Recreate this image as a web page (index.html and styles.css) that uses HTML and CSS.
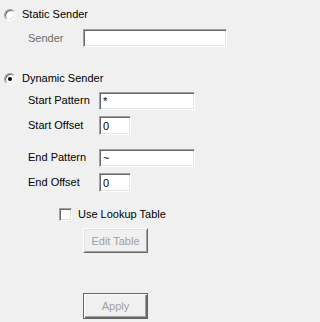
FILE: index.html
```html
<!DOCTYPE html>
<html>
<head>
<meta charset="utf-8">
<link rel="stylesheet" href="styles.css">
</head>
<body>
<div class="panel">
  <div class="radio-row first">
    <span class="radio"></span>
    <span class="label">Static Sender</span>
  </div>
  <div class="field-row sender-row">
    <span class="field-label disabled wide">Sender</span>
    <input class="textbox long-sender" type="text" value="">
  </div>

  <div class="radio-row second">
    <span class="radio checked"></span>
    <span class="label">Dynamic Sender</span>
  </div>
  <div class="field-row start-pattern">
    <span class="field-label">Start Pattern</span>
    <input class="textbox long" type="text" value="*">
  </div>
  <div class="field-row start-offset">
    <span class="field-label">Start Offset</span>
    <input class="textbox short" type="text" value="0">
  </div>
  <div class="field-row end-pattern">
    <span class="field-label">End Pattern</span>
    <input class="textbox long" type="text" value="~">
  </div>
  <div class="field-row end-offset">
    <span class="field-label">End Offset</span>
    <input class="textbox short" type="text" value="0">
  </div>

  <div class="check-row">
    <span class="checkbox"></span>
    <span class="label">Use Lookup Table</span>
  </div>
  <div class="button-row edit-row">
    <button class="btn" disabled>Edit Table</button>
  </div>
  <div class="button-row apply-row">
    <button class="btn default" disabled>Apply</button>
  </div>
</div>
</body>
</html>
```

FILE: styles.css
```css
html, body {
  margin: 0;
  padding: 0;
  background: #f0f0f0;
}
body {
  width: 231px;
  height: 322px;
  overflow: hidden;
  font-family: "Liberation Sans", Arial, sans-serif;
  font-size: 11px;
  color: #000;
}
.panel {
  display: flex;
  flex-direction: column;
}
.radio-row {
  display: flex;
  align-items: center;
  height: 13px;
  padding-left: 4px;
}
.radio-row.first { margin-top: 8px; }
.radio-row.second { margin-top: 25px; }
.radio {
  position: relative;
  box-sizing: border-box;
  width: 12px;
  height: 12px;
  border-radius: 50%;
  background: #fff;
  border: 1px solid;
  border-color: #a0a0a0 #ffffff #ffffff #a0a0a0;
  box-shadow: inset 1px 1px 0 #696969, inset -1px -1px 0 #e3e3e3;
  margin-right: 6px;
  flex: none;
}
.radio.checked::after {
  content: "";
  position: absolute;
  left: 3px;
  top: 3px;
  width: 4px;
  height: 4px;
  border-radius: 50%;
  background: #000;
}
.label {
  line-height: 13px;
  white-space: nowrap;
}
.field-row {
  display: flex;
  align-items: center;
  padding-left: 28px;
}
.sender-row { margin-top: 8px; }
.start-pattern { margin-top: 7px; }
.start-offset { margin-top: 6px; }
.end-pattern { margin-top: 14px; }
.end-offset { margin-top: 6px; }
.field-label {
  width: 71px;
  flex: none;
  white-space: nowrap;
  margin-top: -2px;
}
.field-label.wide { width: 55px; margin-top: 0; }
.disabled { color: #6d6d6d; }
.textbox {
  box-sizing: border-box;
  margin: 0;
  padding: 0 0 0 3px;
  height: 18px;
  background: #fff;
  border: 1px solid;
  border-color: #a0a0a0 #ffffff #ffffff #a0a0a0;
  box-shadow: inset 1px 1px 0 #696969, inset -1px -1px 0 #e3e3e3;
  font-family: "Liberation Sans", Arial, sans-serif;
  font-size: 11px;
  color: #000;
  outline: none;
  flex: none;
}
.long-sender { width: 144px; }
.long { width: 96px; }
.short { width: 32px; height: 19px; }
.check-row {
  display: flex;
  align-items: center;
  height: 13px;
  margin-top: 16px;
  padding-left: 59px;
}
.checkbox {
  box-sizing: border-box;
  width: 13px;
  height: 13px;
  background: #fff;
  border: 1px solid;
  border-color: #a0a0a0 #ffffff #ffffff #a0a0a0;
  box-shadow: inset 1px 1px 0 #696969, inset -1px -1px 0 #e3e3e3;
  margin-right: 6px;
  flex: none;
}
.button-row {
  display: flex;
  padding-left: 83px;
}
.edit-row { margin-top: 7px; }
.apply-row { margin-top: 40px; }
.btn {
  box-sizing: border-box;
  width: 65px;
  height: 25px;
  margin: 0;
  padding: 0;
  background: #f0f0f0;
  border: 1px solid;
  border-color: #ffffff #696969 #696969 #ffffff;
  box-shadow: inset 1px 1px 0 #e3e3e3, inset -1px -1px 0 #a0a0a0;
  font-family: "Liberation Sans", Arial, sans-serif;
  font-size: 11px;
  color: #a0a0a0;
}
.btn.default {
  height: 26px;
  border: 1px solid #646464;
  box-shadow: inset 1px 1px 0 #ffffff, inset -1px -1px 0 #696969, inset -2px -2px 0 #a0a0a0;
}
```
